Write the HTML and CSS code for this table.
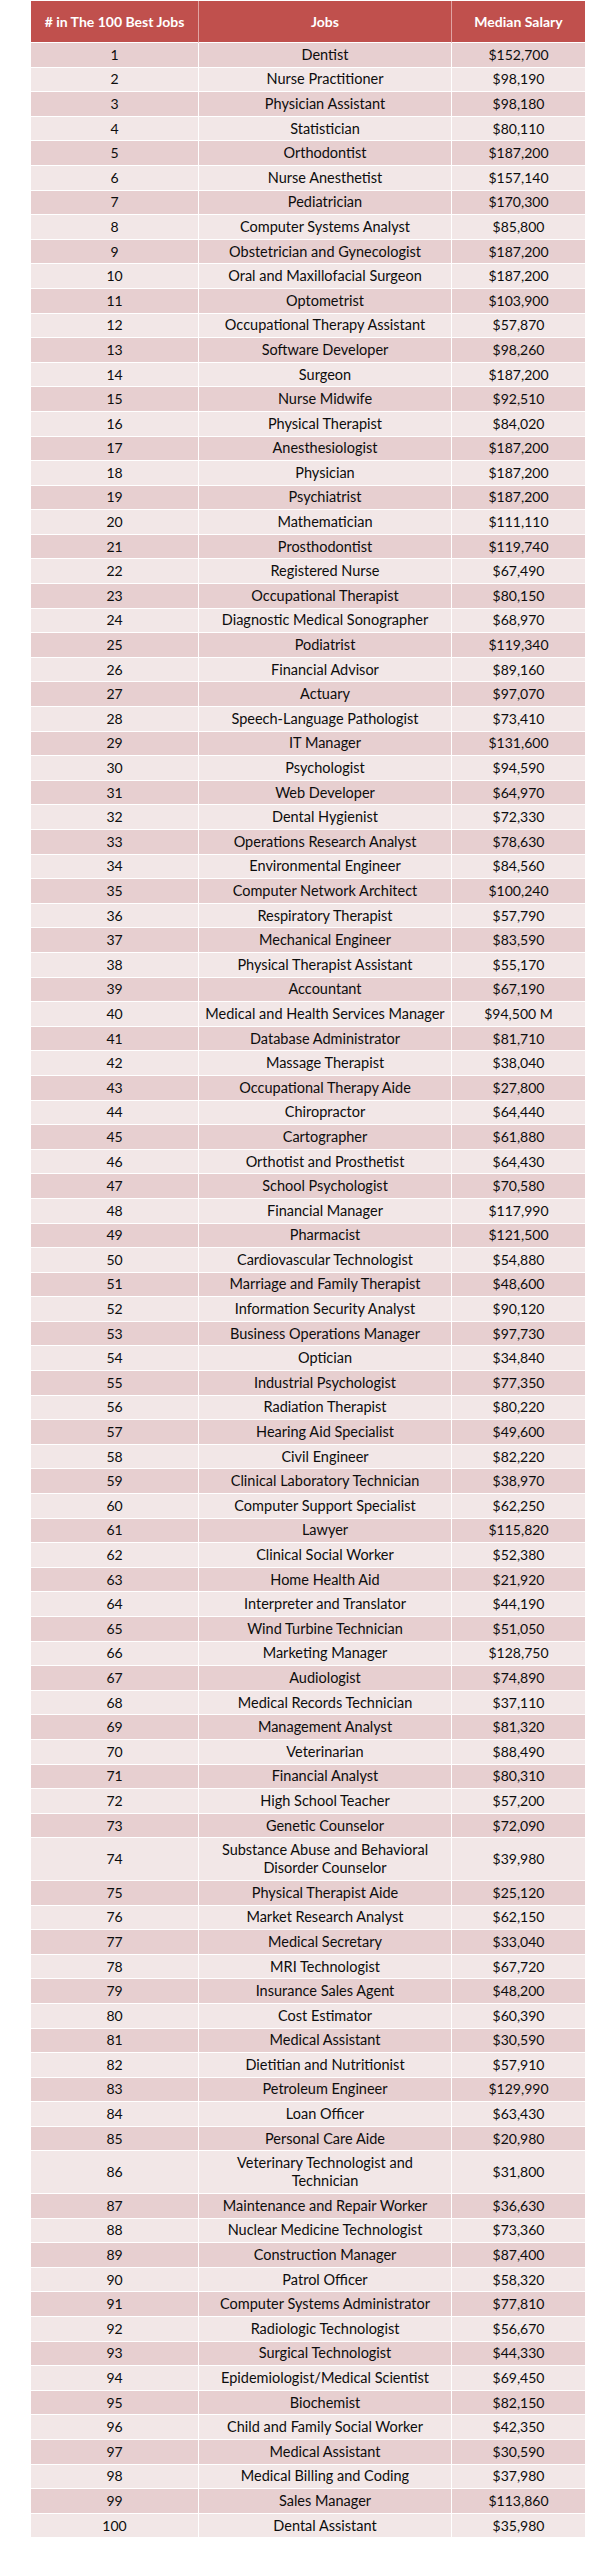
FILE: index.html
```html
<!DOCTYPE html>
<html lang="en">
<head>
<meta charset="utf-8">
<title>The 100 Best Jobs</title>
<link rel="stylesheet" href="styles.css">
</head>
<body>
<table class="jobs">
<colgroup><col class="c-rank"><col class="c-job"><col class="c-sal"></colgroup>
<thead>
<tr><th># in The 100 Best Jobs</th><th>Jobs</th><th>Median Salary</th></tr>
</thead>
<tbody>
<tr><td>1</td><td>Dentist</td><td>$152,700</td></tr>
<tr><td>2</td><td>Nurse Practitioner</td><td>$98,190</td></tr>
<tr><td>3</td><td>Physician Assistant</td><td>$98,180</td></tr>
<tr><td>4</td><td>Statistician</td><td>$80,110</td></tr>
<tr><td>5</td><td>Orthodontist</td><td>$187,200</td></tr>
<tr><td>6</td><td>Nurse Anesthetist</td><td>$157,140</td></tr>
<tr><td>7</td><td>Pediatrician</td><td>$170,300</td></tr>
<tr><td>8</td><td>Computer Systems Analyst</td><td>$85,800</td></tr>
<tr><td>9</td><td>Obstetrician and Gynecologist</td><td>$187,200</td></tr>
<tr><td>10</td><td>Oral and Maxillofacial Surgeon</td><td>$187,200</td></tr>
<tr><td>11</td><td>Optometrist</td><td>$103,900</td></tr>
<tr><td>12</td><td>Occupational Therapy Assistant</td><td>$57,870</td></tr>
<tr><td>13</td><td>Software Developer</td><td>$98,260</td></tr>
<tr><td>14</td><td>Surgeon</td><td>$187,200</td></tr>
<tr><td>15</td><td>Nurse Midwife</td><td>$92,510</td></tr>
<tr><td>16</td><td>Physical Therapist</td><td>$84,020</td></tr>
<tr><td>17</td><td>Anesthesiologist</td><td>$187,200</td></tr>
<tr><td>18</td><td>Physician</td><td>$187,200</td></tr>
<tr><td>19</td><td>Psychiatrist</td><td>$187,200</td></tr>
<tr><td>20</td><td>Mathematician</td><td>$111,110</td></tr>
<tr><td>21</td><td>Prosthodontist</td><td>$119,740</td></tr>
<tr><td>22</td><td>Registered Nurse</td><td>$67,490</td></tr>
<tr><td>23</td><td>Occupational Therapist</td><td>$80,150</td></tr>
<tr><td>24</td><td>Diagnostic Medical Sonographer</td><td>$68,970</td></tr>
<tr><td>25</td><td>Podiatrist</td><td>$119,340</td></tr>
<tr><td>26</td><td>Financial Advisor</td><td>$89,160</td></tr>
<tr><td>27</td><td>Actuary</td><td>$97,070</td></tr>
<tr><td>28</td><td>Speech-Language Pathologist</td><td>$73,410</td></tr>
<tr><td>29</td><td>IT Manager</td><td>$131,600</td></tr>
<tr><td>30</td><td>Psychologist</td><td>$94,590</td></tr>
<tr><td>31</td><td>Web Developer</td><td>$64,970</td></tr>
<tr><td>32</td><td>Dental Hygienist</td><td>$72,330</td></tr>
<tr><td>33</td><td>Operations Research Analyst</td><td>$78,630</td></tr>
<tr><td>34</td><td>Environmental Engineer</td><td>$84,560</td></tr>
<tr><td>35</td><td>Computer Network Architect</td><td>$100,240</td></tr>
<tr><td>36</td><td>Respiratory Therapist</td><td>$57,790</td></tr>
<tr><td>37</td><td>Mechanical Engineer</td><td>$83,590</td></tr>
<tr><td>38</td><td>Physical Therapist Assistant</td><td>$55,170</td></tr>
<tr><td>39</td><td>Accountant</td><td>$67,190</td></tr>
<tr><td>40</td><td>Medical and Health Services Manager</td><td>$94,500 M</td></tr>
<tr><td>41</td><td>Database Administrator</td><td>$81,710</td></tr>
<tr><td>42</td><td>Massage Therapist</td><td>$38,040</td></tr>
<tr><td>43</td><td>Occupational Therapy Aide</td><td>$27,800</td></tr>
<tr><td>44</td><td>Chiropractor</td><td>$64,440</td></tr>
<tr><td>45</td><td>Cartographer</td><td>$61,880</td></tr>
<tr><td>46</td><td>Orthotist and Prosthetist</td><td>$64,430</td></tr>
<tr><td>47</td><td>School Psychologist</td><td>$70,580</td></tr>
<tr><td>48</td><td>Financial Manager</td><td>$117,990</td></tr>
<tr><td>49</td><td>Pharmacist</td><td>$121,500</td></tr>
<tr><td>50</td><td>Cardiovascular Technologist</td><td>$54,880</td></tr>
<tr><td>51</td><td>Marriage and Family Therapist</td><td>$48,600</td></tr>
<tr><td>52</td><td>Information Security Analyst</td><td>$90,120</td></tr>
<tr><td>53</td><td>Business Operations Manager</td><td>$97,730</td></tr>
<tr><td>54</td><td>Optician</td><td>$34,840</td></tr>
<tr><td>55</td><td>Industrial Psychologist</td><td>$77,350</td></tr>
<tr><td>56</td><td>Radiation Therapist</td><td>$80,220</td></tr>
<tr><td>57</td><td>Hearing Aid Specialist</td><td>$49,600</td></tr>
<tr><td>58</td><td>Civil Engineer</td><td>$82,220</td></tr>
<tr><td>59</td><td>Clinical Laboratory Technician</td><td>$38,970</td></tr>
<tr><td>60</td><td>Computer Support Specialist</td><td>$62,250</td></tr>
<tr><td>61</td><td>Lawyer</td><td>$115,820</td></tr>
<tr><td>62</td><td>Clinical Social Worker</td><td>$52,380</td></tr>
<tr><td>63</td><td>Home Health Aid</td><td>$21,920</td></tr>
<tr><td>64</td><td>Interpreter and Translator</td><td>$44,190</td></tr>
<tr><td>65</td><td>Wind Turbine Technician</td><td>$51,050</td></tr>
<tr><td>66</td><td>Marketing Manager</td><td>$128,750</td></tr>
<tr><td>67</td><td>Audiologist</td><td>$74,890</td></tr>
<tr><td>68</td><td>Medical Records Technician</td><td>$37,110</td></tr>
<tr><td>69</td><td>Management Analyst</td><td>$81,320</td></tr>
<tr><td>70</td><td>Veterinarian</td><td>$88,490</td></tr>
<tr><td>71</td><td>Financial Analyst</td><td>$80,310</td></tr>
<tr><td>72</td><td>High School Teacher</td><td>$57,200</td></tr>
<tr><td>73</td><td>Genetic Counselor</td><td>$72,090</td></tr>
<tr><td>74</td><td>Substance Abuse and Behavioral<br>Disorder Counselor</td><td>$39,980</td></tr>
<tr><td>75</td><td>Physical Therapist Aide</td><td>$25,120</td></tr>
<tr><td>76</td><td>Market Research Analyst</td><td>$62,150</td></tr>
<tr><td>77</td><td>Medical Secretary</td><td>$33,040</td></tr>
<tr><td>78</td><td>MRI Technologist</td><td>$67,720</td></tr>
<tr><td>79</td><td>Insurance Sales Agent</td><td>$48,200</td></tr>
<tr><td>80</td><td>Cost Estimator</td><td>$60,390</td></tr>
<tr><td>81</td><td>Medical Assistant</td><td>$30,590</td></tr>
<tr><td>82</td><td>Dietitian and Nutritionist</td><td>$57,910</td></tr>
<tr><td>83</td><td>Petroleum Engineer</td><td>$129,990</td></tr>
<tr><td>84</td><td>Loan Officer</td><td>$63,430</td></tr>
<tr><td>85</td><td>Personal Care Aide</td><td>$20,980</td></tr>
<tr><td>86</td><td>Veterinary Technologist and<br>Technician</td><td>$31,800</td></tr>
<tr><td>87</td><td>Maintenance and Repair Worker</td><td>$36,630</td></tr>
<tr><td>88</td><td>Nuclear Medicine Technologist</td><td>$73,360</td></tr>
<tr><td>89</td><td>Construction Manager</td><td>$87,400</td></tr>
<tr><td>90</td><td>Patrol Officer</td><td>$58,320</td></tr>
<tr><td>91</td><td>Computer Systems Administrator</td><td>$77,810</td></tr>
<tr><td>92</td><td>Radiologic Technologist</td><td>$56,670</td></tr>
<tr><td>93</td><td>Surgical Technologist</td><td>$44,330</td></tr>
<tr><td>94</td><td>Epidemiologist/Medical Scientist</td><td>$69,450</td></tr>
<tr><td>95</td><td>Biochemist</td><td>$82,150</td></tr>
<tr><td>96</td><td>Child and Family Social Worker</td><td>$42,350</td></tr>
<tr><td>97</td><td>Medical Assistant</td><td>$30,590</td></tr>
<tr><td>98</td><td>Medical Billing and Coding</td><td>$37,980</td></tr>
<tr><td>99</td><td>Sales Manager</td><td>$113,860</td></tr>
<tr><td>100</td><td>Dental Assistant</td><td>$35,980</td></tr>
</tbody>
</table>
</body>
</html>
```
FILE: styles.css
```css
html, body {
  margin: 0;
  padding: 0;
  background: #ffffff;
}

.jobs {
  margin: 1px 0 0 31px;
  width: 554px;
  table-layout: fixed;
  border-collapse: separate;
  border-spacing: 0;
  font-family: Lato, "Liberation Sans", sans-serif;
  font-size: 14px;
  color: #0d0d0d;
}

.c-rank { width: 168px; }
.c-job { width: 253px; }
.c-sal { width: 133px; }

.jobs th,
.jobs td {
  text-align: center;
  white-space: nowrap;
  padding: 0;
  border-bottom: 1px solid #ffffff;
}

.jobs th {
  height: 41px;
  padding: 0;
  background: #c0504d;
  color: #ffffff;
  font-weight: bold;
  font-size: 14px;
  vertical-align: middle;
  border-right: 1px solid #e0a4a2;
}

.jobs td {
  padding: 2.8px 0;
  line-height: 18px;
  border-right: 1px solid #ffffff;
}

.jobs td:nth-child(2) {
  font-size: 14.5px;
}

.jobs th:last-child,
.jobs td:last-child {
  border-right: none;
}

.jobs tbody tr:nth-child(odd) td {
  background: #e7cfd0;
}

.jobs tbody tr:nth-child(even) td {
  background: #f2e7e7;
}
```
